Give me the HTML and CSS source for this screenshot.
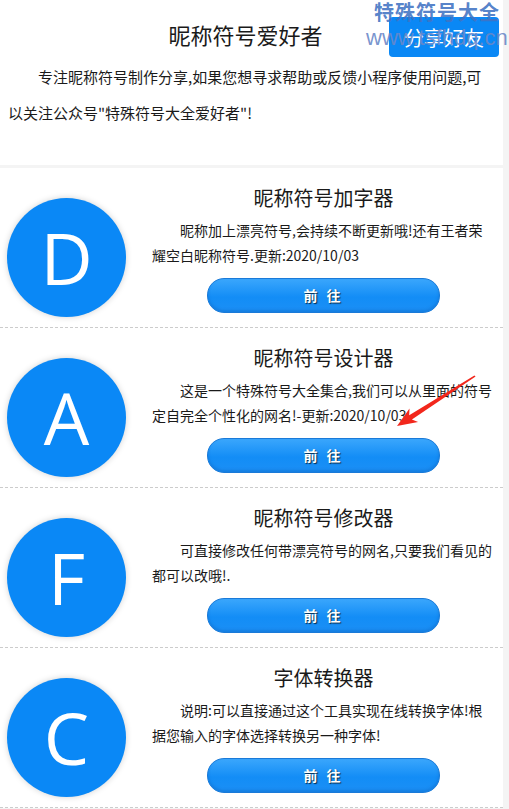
FILE: index.html
```html
<!DOCTYPE html>
<html>
    <head>
        <meta charset="utf-8">
        <title>昵称符号爱好者</title>
        <link rel="stylesheet" href="styles.css">
    </head>
    <body>
        <div class="page">
            <div class="header">
                <h1 class="title">昵称符号爱好者</h1>
                <p class="intro">专注昵称符号制作分享,如果您想寻求帮助或反馈小程序使用问题,可以关注公众号"特殊符号大全爱好者"!</p>
                <button class="share">分享好友</button>
            </div>

            <div class="tools">
                <div class="tool">
                    <div class="badge">D</div>
                    <div class="info">
                        <h2>昵称符号加字器</h2>
                        <p>昵称加上漂亮符号,会持续不断更新哦!还有王者荣耀空白昵称符号.更新:2020/10/03</p>
                        <a class="go" href="#">前 往</a>
                    </div>
                </div>
                <div class="tool">
                    <div class="badge">A</div>
                    <div class="info">
                        <h2>昵称符号设计器</h2>
                        <p>这是一个特殊符号大全集合,我们可以从里面的符号定自完全个性化的网名!-更新:2020/10/03</p>
                        <a class="go" href="#">前 往</a>
                    </div>
                </div>
                <div class="tool">
                    <div class="badge">F</div>
                    <div class="info">
                        <h2>昵称符号修改器</h2>
                        <p>可直接修改任何带漂亮符号的网名,只要我们看见的都可以改哦!.</p>
                        <a class="go" href="#">前 往</a>
                    </div>
                </div>
                <div class="tool">
                    <div class="badge">C</div>
                    <div class="info">
                        <h2>字体转换器</h2>
                        <p>说明:可以直接通过这个工具实现在线转换字体!根据您输入的字体选择转换另一种字体!</p>
                        <a class="go" href="#">前 往</a>
                    </div>
                </div>
            </div>
        </div>

        <!-- watermark + red arrow sit on top of the screenshot -->
        <div class="watermark">
            <div class="wm-name">特殊符号大全</div>
            <div class="wm-url">www.tsfhdq.cn</div>
        </div>
        <svg class="arrow" width="509" height="809" viewBox="0 0 509 809">
            <polygon fill="#f2271c" points="475.6,376.6 474.4,375.4 409.2,415.3 409.5,408.5 397,426 418.1,421.9 411.9,419.5"/>
        </svg>
    </body>
</html>
```

FILE: styles.css
```css
body {
    margin: 0;
    background-color: #f4f4f4;
    font-family: "Noto Sans CJK SC", "Noto Sans", sans-serif;
    color: #1a1a1a;
}
.page {
    position: relative;
    width: 503px;
}

.header {
    position: relative;
    background-color: white;
    height: 165px;
    box-sizing: border-box;
    padding: 19px 12px 0 8px;
    margin-bottom: 3px;
}
.title {
    margin: 0;
    width: 475px;
    text-align: center;
    font-size: 22px;
    font-weight: normal;
    line-height: 30px;
}
.intro {
    margin: 10px 0 0 0;
    font-size: 15px;
    line-height: 36px;
    text-indent: 2em;
}
.share {
    position: absolute;
    top: 17px;
    right: 4px;
    width: 110px;
    height: 40px;
    border: none;
    border-radius: 4px;
    background-color: #0a88f5;
    color: white;
    font-family: inherit;
    font-size: 20px;
    padding: 0;
}

.tools {
    background-color: white;
}
.tool {
    display: flex;
    height: 160px;
    box-sizing: border-box;
    border-bottom: 1px dashed #ccc;
}
.badge {
    flex: none;
    width: 119px;
    height: 119px;
    margin: 30px 0 0 7px;
    border-radius: 50%;
    background-color: #0a88f6;
    box-shadow: 0 0 6px rgba(0, 0, 0, 0.18);
    color: white;
    font-family: "Open Sans", sans-serif;
    font-size: 72px;
    line-height: 119px;
    text-align: center;
}
.info {
    flex: 1;
    display: flex;
    flex-direction: column;
    align-items: center;
    margin-left: 26px;
    padding: 15px 8px 0 0;
}
.info h2 {
    margin: 0;
    font-size: 20px;
    font-weight: normal;
    line-height: 30px;
}
.info p {
    align-self: stretch;
    margin: 5px 0 0 0;
    height: 50px;
    font-size: 14px;
    line-height: 25px;
    text-indent: 2em;
}
.go {
    display: block;
    width: 231px;
    height: 33px;
    margin-top: 10px;
    border: 1px solid #1a7ad8;
    border-radius: 17px;
    background: linear-gradient(#3aa6fc, #138df6 55%, #1b8ff5);
    box-shadow: inset 0 -2px 3px rgba(0, 70, 160, 0.25);
    color: white;
    font-size: 14px;
    font-weight: bold;
    letter-spacing: 3px;
    line-height: 33px;
    text-align: center;
    text-decoration: none;
    text-shadow: 1px 1px 1px rgba(0, 0, 0, 0.7);
}

.watermark {
    position: absolute;
    top: 1px;
    left: 366px;
    z-index: 2;
    pointer-events: none;
}
.wm-name {
    margin-left: 8px;
    color: rgba(65, 115, 195, 0.9);
    font-size: 20px;
    font-weight: bold;
    line-height: 22px;
    letter-spacing: 1px;
}
.wm-url {
    margin-top: 3px;
    color: rgba(105, 135, 200, 0.9);
    font-family: "Liberation Sans", sans-serif;
    font-size: 22px;
    line-height: 24px;
}
.arrow {
    position: absolute;
    top: 0;
    left: 0;
    z-index: 2;
    pointer-events: none;
}
```
